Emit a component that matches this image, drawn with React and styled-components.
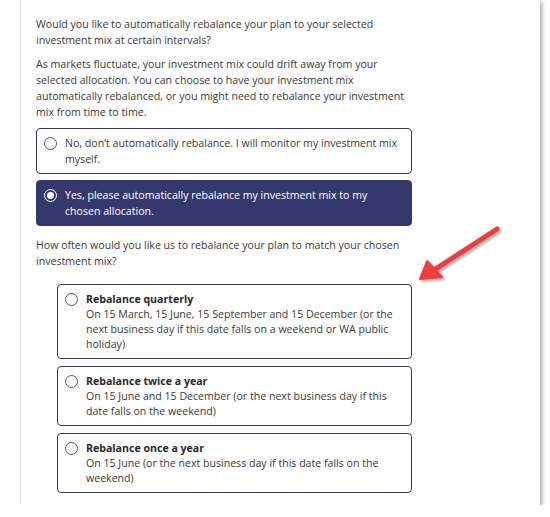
import React from "react";
import styled, { createGlobalStyle } from "styled-components";

const Global = createGlobalStyle`
  html, body { margin: 0; padding: 0; background: #ffffff; }
  body { font-family: "Open Sans", "Noto Sans", sans-serif; color: #3a3a3a; }
`;

const Frame = styled.div`
  position: relative;
  width: 540px;
  height: 505px;
  background: #ffffff;
  box-shadow: 2px 2px 4px rgba(0, 0, 0, 0.35);
  display: flex;
`;

const Content = styled.div`
  margin-left: 20px;
  border-left: 1px solid #e6e6e6;
  padding: 16px 0 0 15px;
  width: 376px;
  display: flex;
  flex-direction: column;
`;

const Para = styled.p`
  margin: 0 0 ${(p) => p.$gap || 8}px 0;
  font-size: 10.6px;
  line-height: 16px;
`;

const OptionList = styled.div`
  display: flex;
  flex-direction: column;
  gap: ${(p) => p.$gap}px;
  margin: 0 0 ${(p) => p.$after}px ${(p) => p.$indent || 0}px;
`;

const Option = styled.label`
  display: flex;
  align-items: flex-start;
  gap: 8px;
  border: 1.5px solid #35386c;
  border-radius: 4px;
  padding: ${(p) => (p.$compact ? "7px 10px 6px 7px" : "6px 10px 6px 7px")};
  background: ${(p) => (p.$selected ? "#35386c" : "#ffffff")};
  color: ${(p) => (p.$selected ? "#ffffff" : "#3a3a3a")};
  font-size: 10.6px;
  line-height: ${(p) => (p.$compact ? 15 : 16)}px;
`;

const Radio = styled.span`
  flex: none;
  box-sizing: border-box;
  width: 13px;
  height: 13px;
  margin-top: ${(p) => (p.$compact ? 1 : 1.5)}px;
  border-radius: 50%;
  border: 1.2px solid ${(p) => (p.$selected ? "#ffffff" : "#55587e")};
  background: transparent;
  display: flex;
  align-items: center;
  justify-content: center;
  &::after {
    content: "";
    width: 7px;
    height: 7px;
    border-radius: 50%;
    background: #ffffff;
    display: ${(p) => (p.$selected ? "block" : "none")};
  }
`;

const OptionText = styled.div`
  display: flex;
  flex-direction: column;
`;

const Title = styled.span`
  font-weight: 700;
  color: #2a2a2a;
`;

const Arrow = styled.svg`
  position: absolute;
  left: 412px;
  top: 222px;
  overflow: visible;
  filter: drop-shadow(2px 2px 1.5px rgba(0, 0, 0, 0.35));
`;

const mainOptions = [
  { text: "No, don’t automatically rebalance. I will monitor my investment mix myself.", selected: false },
  { text: "Yes, please automatically rebalance my investment mix to my chosen allocation.", selected: true },
];

const freqOptions = [
  {
    title: "Rebalance quarterly",
    desc: "On 15 March, 15 June, 15 September and 15 December (or the next business day if this date falls on a weekend or WA public holiday)",
  },
  {
    title: "Rebalance twice a year",
    desc: "On 15 June and 15 December (or the next business day if this date falls on the weekend)",
  },
  {
    title: "Rebalance once a year",
    desc: "On 15 June (or the next business day if this date falls on the weekend)",
  },
];

export default function App() {
  return (
    <>
      <Global />
      <Frame>
        <Content>
          <Para>
            Would you like to automatically rebalance your plan to your selected investment mix at certain intervals?
          </Para>
          <Para>
            As markets fluctuate, your investment mix could drift away from your selected allocation. You can choose to
            have your investment mix automatically rebalanced, or you might need to rebalance your investment mix from
            time to time.
          </Para>
          <OptionList $gap={6} $after={11}>
            {mainOptions.map((o) => (
              <Option key={o.text} $selected={o.selected}>
                <Radio $selected={o.selected} />
                <span>{o.text}</span>
              </Option>
            ))}
          </OptionList>
          <Para $gap={15}>How often would you like us to rebalance your plan to match your chosen investment mix?</Para>
          <OptionList $gap={7} $after={0} $indent={21}>
            {freqOptions.map((o) => (
              <Option key={o.title} $compact>
                <Radio $compact />
                <OptionText>
                  <Title>{o.title}</Title>
                  <span>{o.desc}</span>
                </OptionText>
              </Option>
            ))}
          </OptionList>
        </Content>
        <Arrow width="90" height="65" viewBox="0 0 90 65">
          <line x1="85" y1="7" x2="22" y2="48" stroke="#ee3e3e" strokeWidth="5" strokeLinecap="round" />
          <polygon points="8,57 15,39 30,55" fill="#ee3e3e" stroke="#ee3e3e" strokeWidth="2" strokeLinejoin="round" />
        </Arrow>
      </Frame>
    </>
  );
}
